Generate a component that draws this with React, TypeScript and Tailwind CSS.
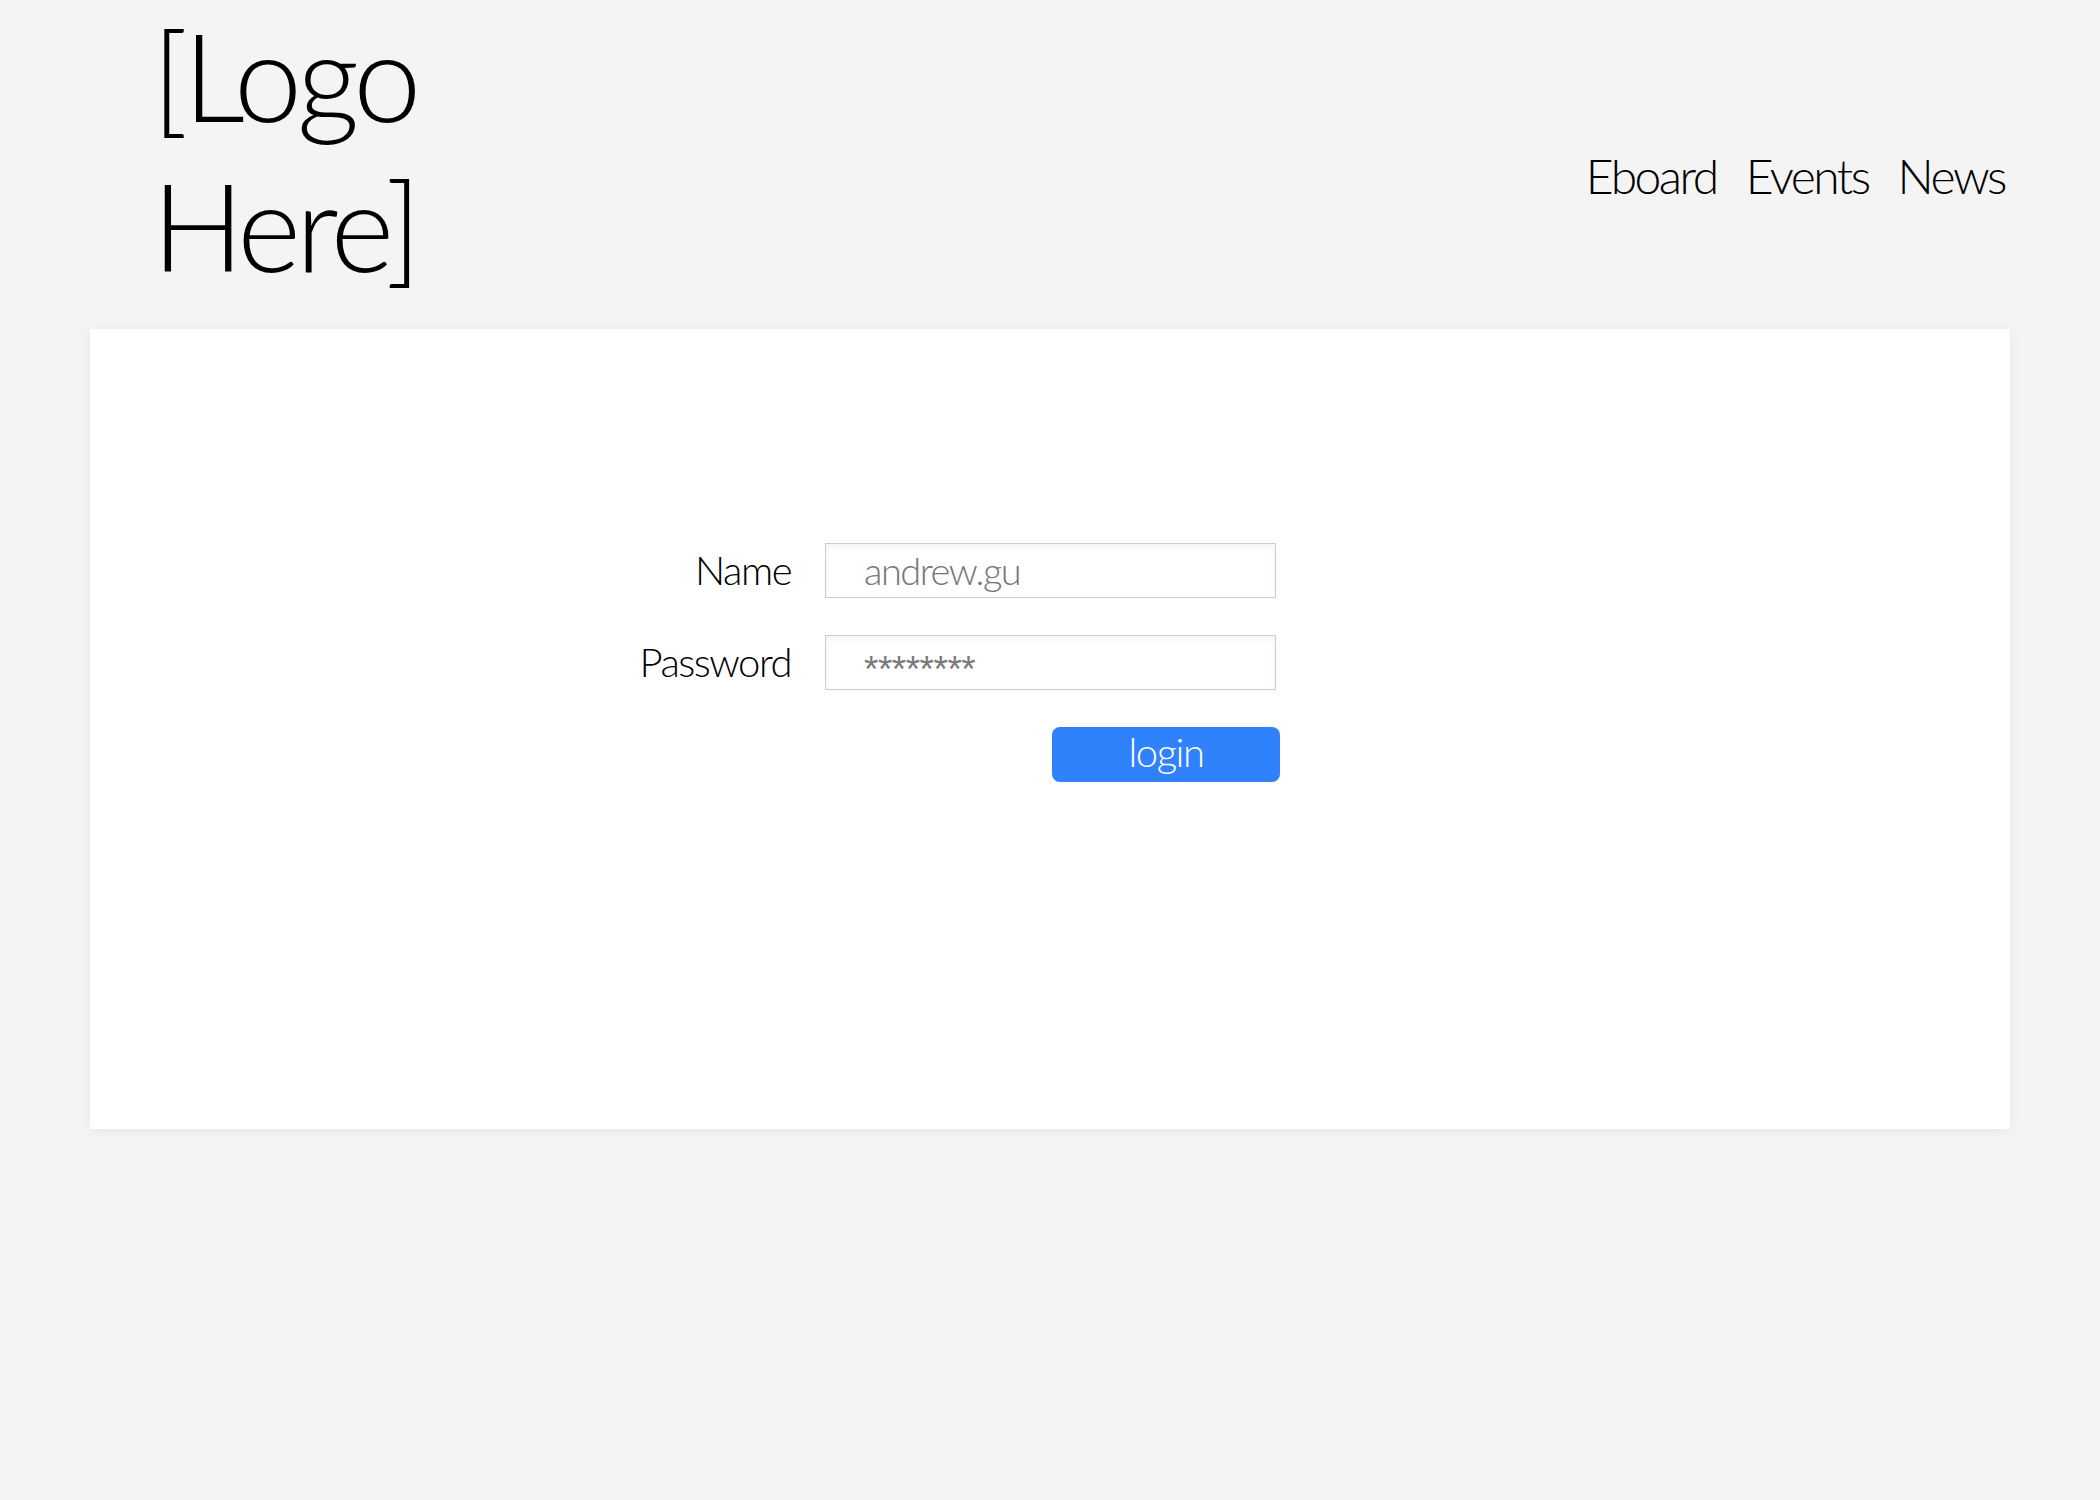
import React from "react";

const font = { fontFamily: "Lato, 'Open Sans', 'Liberation Sans', sans-serif" };

export default function App() {
  return (
    <div className="min-h-[1500px] w-[2100px] bg-[#f4f4f4] text-black" style={font}>
      <header className="flex h-[329px] items-start justify-between pl-[152px] pr-[95px]">
        <div className="text-[122px] font-light leading-[150px] tracking-[-5px]">
          <div>[Logo</div>
          <div>Here]</div>
        </div>
        <nav className="mt-[146px] flex gap-[29px] text-[48px] font-light leading-[60px] tracking-[-2.5px]">
          <a>Eboard</a>
          <a>Events</a>
          <a>News</a>
        </nav>
      </header>
      <main className="mx-[90px] h-[800px] w-[1920px] bg-white pt-[214px] shadow-[0_2px_12px_rgba(0,0,0,0.06)]">
        <div className="ml-[510px] grid w-[690px] grid-cols-[191px_451px] items-center gap-x-[34px] gap-y-[37px]">
          <label className="text-right text-[40px] font-light leading-[55px] tracking-[-1.5px]">Name</label>
          <div className="flex h-[55px] items-center border border-[#cccccc] bg-white pl-[38px] text-[38px] font-light tracking-[-1.5px] text-[#777777] shadow-[inset_0_3px_6px_rgba(0,0,0,0.05)]">
            andrew.gu
          </div>
          <label className="text-right text-[40px] font-light leading-[55px] tracking-[-1.5px]">Password</label>
          <div
            className="flex h-[55px] items-center border border-[#cccccc] bg-white pl-[38px] pt-[14px] text-[37px] tracking-[-0.5px] text-[#7a7a7a] shadow-[inset_0_3px_6px_rgba(0,0,0,0.05)]"
            style={{ fontFamily: "'Liberation Sans', Arial, sans-serif" }}
          >
            ********
          </div>
          <div />
          <div className="flex justify-end">
            <button className="mr-[-4px] flex h-[55px] w-[228px] items-center justify-center rounded-[8px] bg-[#2f81fc] text-[40px] font-light leading-none tracking-[-1.5px] text-white">
              <span className="-mt-[6px]">login</span>
            </button>
          </div>
        </div>
      </main>
    </div>
  );
}
